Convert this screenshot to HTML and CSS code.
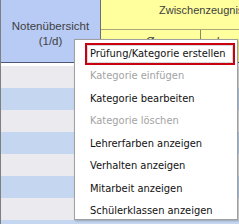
FILE: index.html
```html
<!DOCTYPE html>
<html lang="de">
<head>
<meta charset="utf-8">
<link rel="stylesheet" href="styles.css">
</head>
<body>
<div class="sheet">
  <div class="head-left">
    <span>Notenübersicht</span>
    <span>(1/d)</span>
  </div>
  <div class="head-right">
    <div class="zz">Zwischenzeugnis</div>
    <div class="sub">
      <div class="sub-cell avg">Ø</div>
      <div class="sub-cell bes">ber</div>
    </div>
  </div>
  <div class="row gray"></div>
  <div class="row blue"></div>
  <div class="row gray"></div>
  <div class="row blue"></div>
  <div class="row gray"></div>
  <div class="row blue"></div>
  <div class="row gray"></div>
  <div class="row blue"></div>
</div>
<ul class="menu">
  <li class="item active">Prüfung/Kategorie erstellen</li>
  <li class="item disabled">Kategorie einfügen</li>
  <li class="item">Kategorie bearbeiten</li>
  <li class="item disabled">Kategorie löschen</li>
  <li class="item">Lehrerfarben anzeigen</li>
  <li class="item">Verhalten anzeigen</li>
  <li class="item">Mitarbeit anzeigen</li>
  <li class="item">Schülerklassen anzeigen</li>
</ul>
</body>
</html>
```

FILE: styles.css
```css
html, body {
  margin: 0;
  padding: 0;
  width: 239px;
  height: 224px;
  overflow: hidden;
  background: #ffffff;
}

.sheet {
  display: grid;
  grid-template-columns: 100px 138px;
  grid-auto-rows: 22px;
  border-left: 1px solid #7f7f7f;
  overflow: hidden;
}

.head-left {
  grid-row: span 3;
  height: 63px;
  background: #b8cbf5;
  border-right: 1px solid #6a6f80;
  border-bottom: 1px solid #4b5877;
  box-sizing: border-box;
  display: flex;
  flex-direction: column;
  align-items: center;
  justify-content: center;
  gap: 3px;
  font-size: 11.5px;
  color: #404040;
  padding-top: 4px;
  font-family: "Liberation Sans", sans-serif;
}

.head-right {
  grid-row: span 3;
  height: 63px;
  background: #ffff9d;
  border-bottom: 1px solid #4b5877;
  box-sizing: border-box;
  display: flex;
  flex-direction: column;
  font-family: "Liberation Sans", sans-serif;
  font-size: 11px;
  color: #404040;
  overflow: hidden;
}

.zz {
  height: 30px;
  border-bottom: 1px solid #a8a878;
  box-sizing: border-box;
  padding-left: 58px;
  padding-top: 4px;
  white-space: nowrap;
}

.sub {
  flex: 1;
  display: flex;
}

.sub-cell {
  padding-top: 5px;
}

.avg {
  width: 99px;
  border-right: 1px solid #8a8a62;
  text-align: center;
}

.bes {
  padding-left: 16px;
}

.row {
  grid-column: span 2;
  height: 22px;
}

.gray { background: #ebebef; }
.blue { background: #c5d6f0; }

.menu {
  position: absolute;
  left: 74px;
  top: 39px;
  width: 164px;
  height: 181px;
  margin: 0;
  padding: 3px 0 0 0;
  list-style: none;
  background: #ffffff;
  border: 1px solid #a0a0a0;
  box-sizing: border-box;
  box-shadow: 1px 1px 2px rgba(0, 0, 0, 0.25);
  font-family: "DejaVu Sans Condensed", "DejaVu Sans", sans-serif;
  font-stretch: semi-condensed;
  font-size: 11px;
  color: #111111;
}

.item {
  height: 22.5px;
  line-height: 22px;
  padding-left: 15px;
  white-space: nowrap;
  box-sizing: border-box;
}

.item.disabled {
  color: #a3a3a3;
}

.item.active {
  height: 22px;
  margin: 0 2px 0 10px;
  padding-left: 3px;
  border: 2px solid #c8000f;
  box-shadow: inset 0 0 0 1px #d8d8d8;
  line-height: 18px;
}
```
